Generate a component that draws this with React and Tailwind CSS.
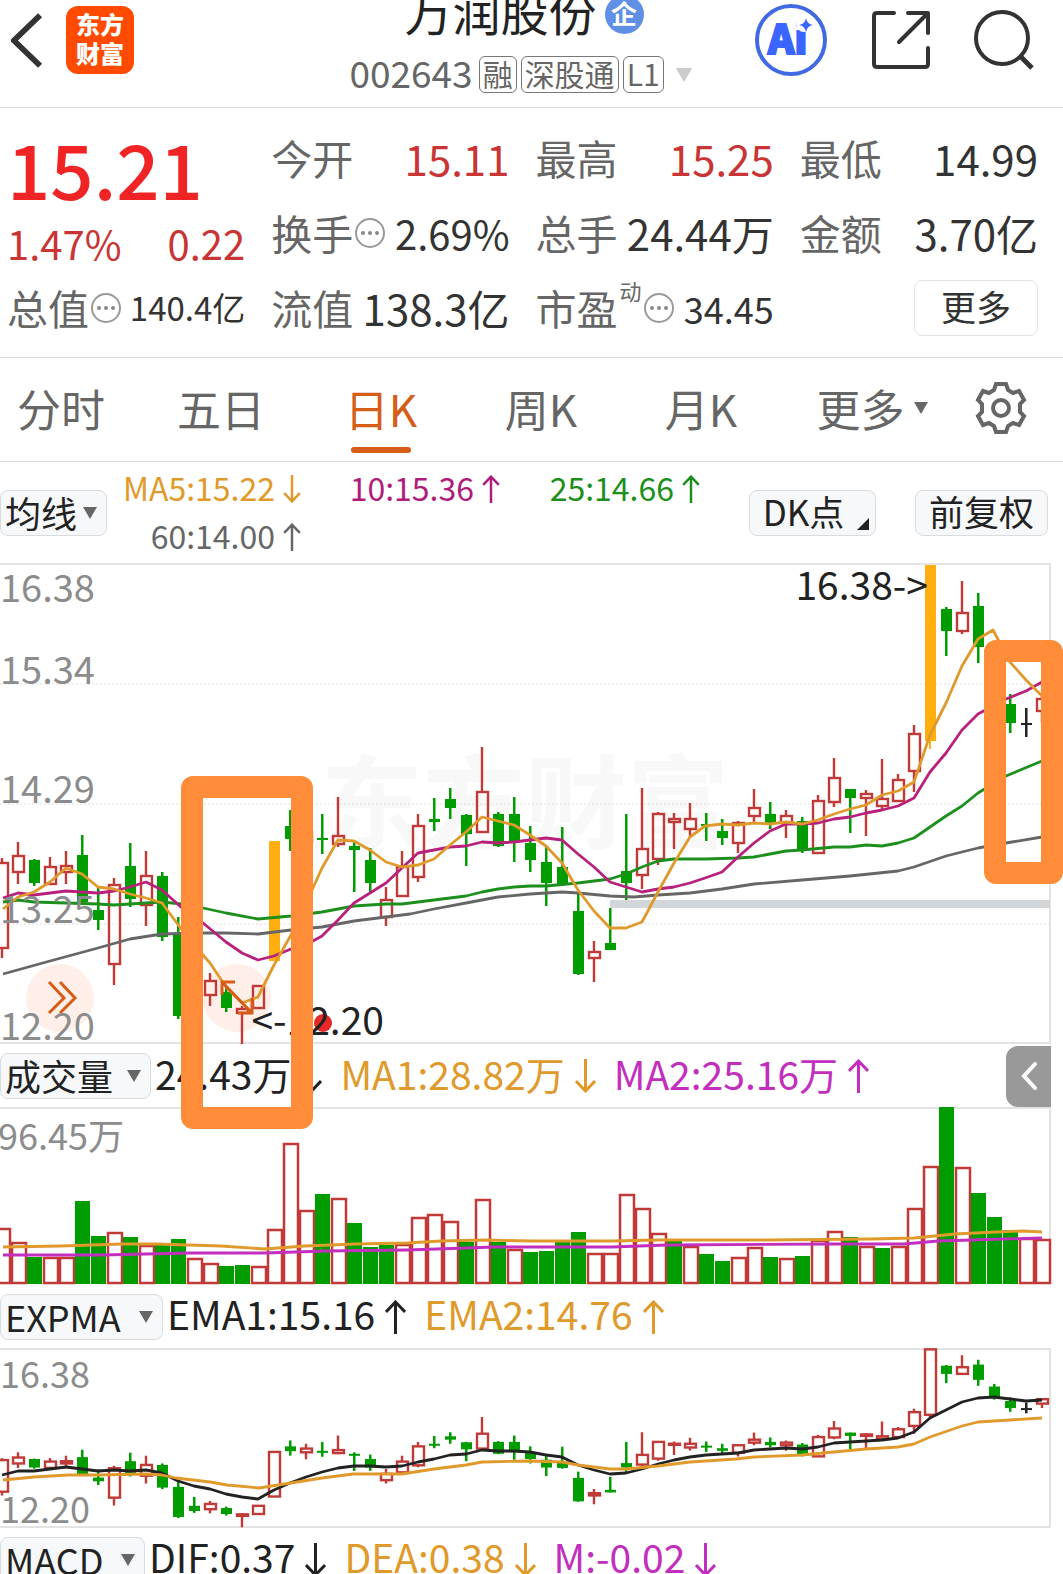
import { useState } from "react";

const RED = "#c03a38";
const GREEN = "#009c00";
const GOLD = "#e09a2b";

// [color, high, bodyTop, bodyBottom, low]
const candles = [
  ["r", 858, 863, 948, 958], ["r", 842, 856, 872, 884], ["g", 859, 860, 883, 886],
  ["r", 857, 867, 884, 885], ["r", 851, 866, 872, 884], ["g", 835, 855, 902, 903],
  ["g", 888, 910, 920, 930], ["r", 878, 885, 964, 985], ["g", 843, 866, 899, 907],
  ["r", 851, 876, 905, 926], ["g", 872, 876, 937, 941], ["g", 917, 935, 1016, 1019],
  ["g", 962, 986, 1000, 1005], ["r", 973, 981, 995, 1006], ["g", 988, 992, 1008, 1012],
  ["r", 1006, 1009, 1013, 1044], ["r", 985, 986, 1008, 1009], ["y", 841, 841, 961, 961],
  ["g", 810, 826, 839, 851], ["r", 819, 832, 842, 861], ["g", 814, 838, 840, 854],
  ["r", 797, 836, 844, 847], ["g", 842, 846, 850, 892], ["g", 848, 860, 883, 892],
  ["r", 887, 900, 917, 926], ["r", 851, 867, 896, 897], ["r", 814, 826, 877, 882],
  ["g", 798, 819, 822, 831], ["g", 788, 799, 808, 819], ["g", 814, 815, 834, 866],
  ["r", 747, 792, 832, 833], ["g", 812, 814, 846, 847], ["g", 797, 814, 842, 862],
  ["g", 826, 843, 860, 872], ["g", 846, 862, 883, 906], ["g", 827, 867, 884, 886],
  ["g", 894, 911, 974, 975], ["r", 941, 952, 958, 982], ["g", 908, 943, 950, 950],
  ["g", 814, 871, 883, 900], ["r", 788, 849, 875, 889], ["r", 812, 814, 859, 865],
  ["r", 813, 819, 822, 849], ["r", 803, 819, 829, 837], ["g", 813, 824, 826, 841],
  ["g", 819, 831, 838, 845], ["r", 821, 823, 843, 853], ["r", 789, 808, 816, 823],
  ["g", 802, 814, 823, 829], ["r", 810, 816, 823, 838], ["g", 817, 821, 851, 853],
  ["r", 795, 801, 853, 853], ["r", 758, 778, 802, 807], ["g", 789, 789, 798, 833],
  ["r", 790, 794, 798, 836], ["r", 759, 799, 806, 810], ["r", 774, 780, 801, 802],
  ["r", 725, 734, 771, 792], ["y", 565, 565, 741, 749], ["g", 607, 609, 631, 656],
  ["r", 581, 613, 631, 634], ["g", 593, 606, 647, 663], ["g", 658, 665, 695, 700],
  ["g", 694, 704, 723, 733], ["k", 708, 723, 724, 737], ["r", 696, 699, 711, 723],
];

const volumes = [
  ["r", 1229], ["r", 1243], ["g", 1257], ["r", 1258], ["r", 1258], ["g", 1201],
  ["g", 1236], ["r", 1233], ["g", 1237], ["r", 1246], ["g", 1245], ["g", 1239],
  ["r", 1259], ["r", 1264], ["g", 1266], ["g", 1265], ["r", 1267], ["r", 1230],
  ["r", 1144], ["r", 1211], ["g", 1194], ["r", 1199], ["g", 1223], ["g", 1247],
  ["g", 1245], ["r", 1245], ["r", 1218], ["r", 1215], ["r", 1222], ["g", 1242],
  ["r", 1200], ["g", 1242], ["r", 1250], ["g", 1252], ["g", 1251], ["g", 1241],
  ["g", 1232], ["r", 1254], ["r", 1254], ["r", 1195], ["r", 1209], ["r", 1234],
  ["g", 1239], ["r", 1247], ["g", 1254], ["g", 1261], ["r", 1258], ["r", 1248],
  ["g", 1257], ["r", 1259], ["g", 1256], ["r", 1241], ["r", 1232], ["g", 1237],
  ["r", 1247], ["g", 1248], ["r", 1247], ["r", 1209], ["r", 1167], ["g", 1107],
  ["r", 1168], ["g", 1193], ["g", 1217], ["g", 1230], ["r", 1239], ["r", 1240],
];

const ma5 =
  "3,909 18,897 34,892 50,882 66,868 82,874 98,887 114,889 130,894 146,898 162,903 182,930 203,955 210,963 226,987 242,1003 258,997 274,965 291,935 313,888 322,868 338,840 354,841 370,850 386,862 402,867 418,865 434,859 450,845 466,832 482,817 498,821 514,825 530,835 546,846 562,863 578,890 594,911 610,928 626,928 642,922 658,892 674,863 690,837 705,826 722,824 738,825 754,823 770,824 786,822 802,824 818,820 834,814 850,809 866,805 882,795 898,791 914,782 930,735 946,703 962,666 978,639 993,630 1010,662 1026,680 1042,696";
const ma10 =
  "3,898 18,893 34,895 66,891 98,893 114,891 130,887 146,882 162,890 182,908 203,923 226,942 242,953 258,960 274,956 291,949 313,941 322,936 338,920 354,903 370,893 386,883 402,868 418,853 434,850 450,847 466,846 482,842 498,843 514,842 530,840 546,838 562,840 578,854 594,867 610,882 626,887 642,892 658,889 674,887 690,883 705,878 722,872 738,857 754,843 770,831 786,824 802,824 818,823 834,819 850,817 866,813 882,810 898,806 914,798 930,772 946,753 962,730 978,714 1006,699 1026,691 1042,682";
const ma25 =
  "3,902 18,900 34,902 66,903 98,904 114,905 130,904 162,902 182,904 203,908 226,913 258,919 291,916 322,912 354,906 386,904 402,904 418,902 434,900 450,898 466,896 482,892 498,889 514,887 530,886 546,886 578,883 610,879 626,874 642,867 658,861 674,859 705,859 738,858 754,857 770,854 786,851 802,850 834,847 850,847 866,845 882,846 898,843 914,838 930,827 946,816 962,806 978,793 1006,776 1042,761";
const ma60 =
  "3,974 50,961 98,948 130,939 162,934 200,933 226,933 258,934 291,930 322,927 354,921 386,917 410,914 434,909 466,903 498,897 530,894 562,892 578,893 610,896 634,897 658,895 690,893 722,889 754,884 802,880 850,876 898,871 914,867 946,856 978,848 1006,843 1042,837";
const volMa1 =
  "3,1247 61,1246 122,1244 156,1244 221,1246 265,1249 305,1246 356,1244 407,1243 441,1241 485,1240 531,1241 612,1241 657,1240 769,1240 870,1239 914,1238 955,1234 996,1232 1023,1231 1042,1232";
const volMa2 =
  "3,1255 102,1255 190,1253 265,1253 326,1251 407,1250 495,1247 612,1247 667,1245 836,1244 904,1244 938,1241 972,1240 1042,1238";
const ema1 = [
  1475, 1471, 1471, 1469, 1467, 1469, 1471, 1470, 1471, 1470, 1473, 1481, 1486,
  1489, 1494, 1497, 1499, 1490, 1483, 1477, 1472, 1468, 1466, 1466, 1467, 1466,
  1462, 1459, 1455, 1454, 1450, 1451, 1451, 1452, 1455, 1457, 1465, 1470, 1474,
  1473, 1469, 1464, 1460, 1457, 1455, 1454, 1453, 1450, 1449, 1448, 1449, 1447,
  1443, 1442, 1441, 1440, 1438, 1432, 1418, 1410, 1402, 1398, 1397, 1399, 1401,
  1400,
];
const ema2 =
  "3,1480 34,1477 68,1475 98,1475 146,1474 162,1475 176,1478 210,1482 227,1485 259,1488 291,1483 322,1478 353,1474 402,1474 434,1469 466,1465 482,1462 530,1461 562,1462 578,1465 610,1469 626,1469 658,1466 690,1462 736,1459 754,1457 802,1455 834,1452 866,1449 898,1447 914,1444 930,1437 962,1426 978,1422 994,1421 1042,1418";

const xOf = (i) => 2 + i * 16;

const Candle = ({ x, data, y = (v) => v, hollow }) => {
  const [type, high, top, bottom, low] = data;
  const t = y(top);
  const h = Math.max(y(bottom) - t, 1);

  if (type === "y" && !hollow) {
    return (
      <g fill="#ffae0d">
        <rect x={x - 5} y={t} width="11" height={h} />
        <rect x={x - 1} y={t} width="2" height={low - t} />
      </g>
    );
  }
  if (type === "g" || type === "k") {
    const color = type === "g" ? GREEN : "#222";
    return (
      <g fill={color}>
        <rect x={x - 1} y={y(high)} width="2.5" height={y(low) - y(high)} />
        <rect x={x - 5} y={t} width="11" height={Math.max(h, 2)} />
      </g>
    );
  }
  return (
    <g stroke={RED} strokeWidth="2.4" fill="none">
      <path d={`M${x} ${y(high)}V${t}M${x} ${t + h}V${y(low)}`} />
      <rect x={x - 5} y={t} width="11" height={h} />
    </g>
  );
};

const Line = ({ points, color }) => (
  <polyline
    points={points}
    fill="none"
    stroke={color}
    strokeWidth="2.8"
    strokeLinejoin="round"
  />
);

const Arrow = ({ down, small }) => (
  <svg
    viewBox="0 0 21 34"
    className={`shrink-0 ${small ? "w-[18px] h-[28px]" : "w-[21px] h-[34px]"} ${down ? "rotate-180" : ""}`}
    fill="none"
    stroke="currentColor"
    strokeWidth="3"
  >
    <path d="M10.5 34V2M1 12L10.5 2L20 12" />
  </svg>
);

const Triangle = ({ className }) => (
  <svg viewBox="0 0 14 12" className={className} fill="currentColor">
    <path d="M0 0H14L7 12Z" />
  </svg>
);

const Dots = () => (
  <svg viewBox="0 0 30 30" className="w-[30px] h-[30px] shrink-0 ml-[2px]">
    <circle cx="15" cy="15" r="14" fill="none" stroke="#999" strokeWidth="2" />
    <circle cx="8" cy="15" r="2" fill="#888" />
    <circle cx="15" cy="15" r="2" fill="#888" />
    <circle cx="22" cy="15" r="2" fill="#888" />
  </svg>
);

const Picker = ({ label, options, className }) => (
  <label
    className={`relative flex items-center h-[46px] shrink-0 bg-[#f6f8fa] border border-[#d9dcdf] rounded-lg text-[#222] ${className}`}
  >
    <select
      aria-label={label}
      className="appearance-none w-full h-full pl-1 pb-1 bg-transparent text-[36px] leading-[42px] outline-none"
    >
      {options.map((o) => (
        <option key={o}>{o}</option>
      ))}
    </select>
    <Triangle className="absolute right-[9px] w-[14px] h-[12px] text-[#666] pointer-events-none" />
  </label>
);

const Reading = ({ text, down, small, className }) => (
  <span
    className={`flex items-center justify-end whitespace-nowrap ${small ? "gap-2 text-[32px]" : "gap-[10px] text-[39px]"} leading-none ${className}`}
  >
    <span className={small ? "-mt-1" : "-mt-[6px]"}>{text}</span>
    <Arrow down={down} small={small} />
  </span>
);

const Stat = ({ label, sup, dots, value, className = "text-[42px] text-[#333]" }) => (
  <div className="flex items-center justify-between whitespace-nowrap leading-none">
    <dt className="flex items-center text-[41px] text-[#666]">
      {label}
      {sup && <span className="text-[22px] self-start -mt-2 ml-[2px]">{sup}</span>}
      {dots && <Dots />}
    </dt>
    <dd className={className}>{value}</dd>
  </div>
);

const Header = () => (
  <header className="h-[108px] shrink-0 grid grid-cols-[1fr_auto_1fr] pl-[10px] pr-[29px] border-b border-[#d6d6d6]">
    <div className="flex items-start gap-[23px] pt-[6px]">
      <button aria-label="返回" className="mt-[7px]">
        <svg viewBox="0 0 34 56" className="w-[33px] h-[55px]" fill="none" stroke="#333" strokeWidth="6">
          <path d="M31 2L4 28L31 54" strokeLinejoin="round" />
        </svg>
      </button>
      <div className="w-[68px] h-[68px] pt-[3px] rounded-xl bg-[#ff4a00] text-white text-center font-black text-[24px] leading-[29px]">
        东方
        <br />
        财富
      </div>
    </div>
    <div className="flex flex-col items-center">
      <h1 className="flex items-center gap-2 -mt-[15px] pl-1 text-[48px] leading-[50px] text-[#222] whitespace-nowrap">
        万润股份
        <span className="flex items-center justify-center mt-[9px] w-[39px] h-[39px] rounded-full bg-[#6090e6] text-white text-[26px] font-bold leading-none pb-1">
          企
        </span>
      </h1>
      <div className="flex items-center gap-[4px] mt-[21px] text-[#666] leading-none whitespace-nowrap">
        <span className="text-[37px] -mt-1">002643</span>
        <span className="h-[37px] px-[3px] ml-[2px] border border-[#777] rounded-md text-[30px] leading-[32px]">融</span>
        <span className="h-[37px] px-[3px] border border-[#777] rounded-md text-[30px] leading-[32px]">深股通</span>
        <span className="h-[37px] px-[3px] border border-[#777] rounded-md text-[30px] leading-[32px]">L1</span>
        <Triangle className="w-[22px] h-[14px] ml-[5px] text-[#ccc]" />
      </div>
    </div>
    <div className="flex items-start justify-end gap-[44px] pt-[3px]">
      <button aria-label="Ai">
        <svg viewBox="0 0 74 74" className="w-[74px] h-[74px]">
          <circle cx="37" cy="37" r="34" fill="none" stroke="#4169e1" strokeWidth="4" />
          <text x="14" y="51" fontSize="40" fontWeight="900" fill="#3a66ff" stroke="#3a66ff" strokeWidth="2">
            Ai
          </text>
          <circle cx="50" cy="21" r="8" fill="#fff" />
          <path d="M52 15Q53 21 59 22Q53 23 52 29Q51 23 45 22Q51 21 52 15Z" fill="#3a66ff" />
        </svg>
      </button>
      <button aria-label="分享" className="mt-2">
        <svg
          viewBox="0 0 58 58"
          className="w-[58px] h-[58px]"
          fill="none"
          stroke="#333"
          strokeWidth="4"
          strokeLinecap="round"
          strokeLinejoin="round"
        >
          <path d="M22 2H5Q2 2 2 5V53Q2 56 5 56H53Q56 56 56 53V37M36 2H56V22M55 3L27 31" />
        </svg>
      </button>
      <button aria-label="搜索" className="mt-[7px]">
        <svg viewBox="0 0 60 60" className="w-[60px] h-[60px]" fill="none" stroke="#333" strokeWidth="4">
          <circle cx="28" cy="28" r="26" />
          <path d="M46 46L58 58" strokeWidth="5" />
        </svg>
      </button>
    </div>
  </header>
);

const Quote = () => (
  <dl className="h-[250px] shrink-0 grid grid-cols-4 grid-rows-[75px_75px_75px] gap-x-[26px] pt-[12px] pl-[7px] pr-[25px] border-b border-[#d6d6d6]">
    <div className="row-span-2 leading-none">
      <div className="text-[76px] font-medium text-[#f02424] mt-[9px]">15.21</div>
      <div className="flex justify-between mt-[18px] text-[40px] text-[#c93434]">
        <span>1.47%</span>
        <span>0.22</span>
      </div>
    </div>
    <Stat label="今开" value="15.11" className="text-[42px] text-[#c93434]" />
    <Stat label="最高" value="15.25" className="text-[42px] text-[#c93434]" />
    <Stat label="最低" value="14.99" />
    <Stat label="换手" dots value="2.69%" className="text-[40px] text-[#333]" />
    <Stat label="总手" value="24.44万" />
    <Stat label="金额" value="3.70亿" />
    <Stat label="总值" dots value="140.4亿" className="text-[33px] text-[#333]" />
    <Stat label="流值" value="138.3亿" />
    <Stat label="市盈" sup="动" dots value="34.45" className="text-[36px] text-[#333]" />
    <div className="flex items-center justify-end">
      <button className="w-[124px] h-[56px] pb-1 border border-[#e3e3e3] rounded-lg text-[35px] leading-none text-[#333]">
        更多
      </button>
    </div>
  </dl>
);

const tabs = ["分时", "五日", "日K", "周K", "月K", "更多"];

const Tabs = () => {
  const [active, setActive] = useState("日K");

  return (
    <nav className="h-[104px] shrink-0 grid grid-cols-[141fr_160fr_160fr_160fr_160fr_182fr_75fr] pr-[25px] border-b border-[#d6d6d6] text-[44px] leading-none text-[#666]">
      {tabs.map((tab, i) => (
        <button
          key={tab}
          onClick={() => setActive(tab)}
          className={`relative flex items-center pb-1 whitespace-nowrap ${i === 0 ? "pl-[17px]" : "justify-center"} ${active === tab ? "text-[#d65d18]" : ""}`}
        >
          {tab}
          {tab === "更多" && <Triangle className="w-[14px] h-[12px] ml-[9px]" />}
          {active === tab && (
            <span className="absolute bottom-2 left-1/2 -translate-x-1/2 w-[60px] h-[6px] rounded-full bg-[#d65d18]" />
          )}
        </button>
      ))}
      <button aria-label="设置" className="flex items-center justify-center pb-1">
        <svg viewBox="0 0 52 52" className="w-[52px] h-[52px]" fill="none" stroke="currentColor" strokeWidth="4">
          <path d="M21 2H31L33 8L38 11L44 9L49 18L45 22V30L49 34L44 43L38 41L33 44L31 50H21L19 44L14 41L8 43L3 34L7 30V22L3 18L8 9L14 11L19 8Z" />
          <circle cx="26" cy="26" r="8" />
        </svg>
      </button>
    </nav>
  );
};

const toolButton =
  "relative h-[46px] pb-1 bg-[#f6f8fa] border border-[#d9dcdf] rounded-lg text-[35px] leading-none text-[#222]";

const Averages = () => (
  <div className="h-[101px] shrink-0 flex items-center pr-[15px]">
    <Picker label="指标" options={["均线", "BOLL"]} className="w-[107px]" />
    <div className="grid grid-cols-[194px_199px_200px] grid-rows-[48px_48px]">
      <Reading small down text="MA5:15.22" className="text-[#e09a2b]" />
      <Reading small text="10:15.36" className="text-[#b01c7c]" />
      <Reading small text="25:14.66" className="text-[#1c8f1c]" />
      <Reading small text="60:14.00" className="text-[#666]" />
    </div>
    <div className="flex gap-[39px] ml-auto">
      <button className={`${toolButton} w-[127px] pr-[18px]`}>
        DK点
        <svg viewBox="0 0 12 12" className="absolute right-[6px] bottom-[5px] w-3 h-3" fill="#222">
          <path d="M12 0V12H0Z" />
        </svg>
      </button>
      <button className={`${toolButton} w-[133px]`}>前复权</button>
    </div>
  </div>
);

const PriceChart = () => (
  <svg viewBox="0 563 1063 482" className="block w-full h-auto">
    <text x="321" y="841" fontSize="102" fontWeight="700" fill="#f8f8f8">
      东方财富
    </text>
    <circle cx="60" cy="998" r="34" fill="#ffefe8" />
    <circle cx="237" cy="998" r="34" fill="#ffefe8" />
    <path d="M0 564H1050V1043H0" fill="none" stroke="#e3e3e3" strokeWidth="2" />
    <path d="M0 684H1050M0 804H1050M0 924H1050" stroke="#dedede" strokeDasharray="2 2" />
    <rect x="610" y="900" width="440" height="8" fill="#d3d7da" />
    {candles.map((c, i) => (
      <Candle key={i} x={xOf(i)} data={c} />
    ))}
    <Line points={ma60} color="#666" />
    <Line points={ma25} color="#1c8f1c" />
    <Line points={ma10} color="#b8207c" />
    <Line points={ma5} color={GOLD} />
    <path
      d="M49 982L64 998L49 1013M60 982L75 998L60 1013M222 995V982H235M223 983L251 1012M252 998V1013H238"
      fill="none"
      stroke="#d65d18"
      strokeWidth="3"
    />
    <g fontSize="38" fill="#8c8c8c">
      <text x="0" y="602">16.38</text>
      <text x="0" y="684">15.34</text>
      <text x="0" y="803">14.29</text>
      <text x="0" y="923">13.25</text>
      <text x="0" y="1040">12.20</text>
    </g>
    <circle cx="323" cy="1023" r="9" fill="#e62828" />
    <g fontSize="39" fill="#222">
      <text x="928" y="600" textAnchor="end">16.38-&gt;</text>
      <text x="384" y="1035" textAnchor="end">&lt;-12.20</text>
    </g>
  </svg>
);

const VolumeChart = () => (
  <svg viewBox="0 1107 1063 178" className="block w-full h-auto">
    <path d="M0 1108H1050V1284" fill="none" stroke="#e3e3e3" strokeWidth="2" />
    {volumes.map(([type, top], i) =>
      type === "g" ? (
        <rect key={i} x={xOf(i) - 7} y={top} width="15" height={1284 - top} fill={GREEN} />
      ) : (
        <rect
          key={i}
          x={xOf(i) - 6}
          y={top}
          width="14"
          height={1283 - top}
          fill="#fff"
          stroke={RED}
          strokeWidth="2.5"
        />
      ),
    )}
    <Line points={volMa1} color={GOLD} />
    <Line points={volMa2} color="#c22fbe" />
    <text x="-2" y="1150" fontSize="36" fill="#8c8c8c">
      96.45万
    </text>
  </svg>
);

const ExpmaChart = () => {
  // same candles, squeezed into the lower panel
  const y = (v) => 1349 + (v - 564) * 0.3716;

  return (
    <svg viewBox="0 1348 1063 180" className="block w-full h-auto shrink-0">
      <path d="M0 1349H1050V1527H0" fill="none" stroke="#e3e3e3" strokeWidth="2" />
      <g fontSize="36" fill="#8c8c8c">
        <text x="0" y="1388">16.38</text>
        <text x="0" y="1523">12.20</text>
      </g>
      {candles.map((c, i) => (
        <Candle key={i} x={xOf(i)} data={c} y={y} hollow />
      ))}
      <Line points={ema1.map((v, i) => `${xOf(i)},${v}`).join(" ")} color="#222" />
      <Line points={ema2} color={GOLD} />
    </svg>
  );
};

const App = () => {
  return (
    <main className="relative flex flex-col h-screen overflow-hidden bg-white font-['Noto_Sans_CJK_SC',sans-serif]">
      <Header />
      <Quote />
      <Tabs />
      <Averages />
      <section className="relative shrink-0">
        <PriceChart />
        <div className="h-[62px] flex items-center">
          <Picker label="副图一" options={["成交量", "成交额"]} className="w-[151px]" />
          <Reading down text="24.43万" className="ml-[4px] text-[#222]" />
          <Reading down text="MA1:28.82万" className="ml-[18px] text-[#e09a2b]" />
          <Reading text="MA2:25.16万" className="ml-[18px] text-[#c22fbe]" />
          <button
            aria-label="展开"
            className="flex items-center justify-center w-[45px] h-[61px] ml-auto mr-3 rounded-l-xl bg-[#999]"
          >
            <svg
              viewBox="0 0 16 28"
              className="w-[16px] h-[28px]"
              fill="none"
              stroke="#fff"
              strokeWidth="4"
              strokeLinecap="round"
            >
              <path d="M14 2L3 14L14 26" />
            </svg>
          </button>
        </div>
        <VolumeChart />
        {/* highlighted ranges */}
        <div className="absolute left-[181px] top-[213px] w-[132px] h-[353px] border-[22px] border-[#ff8c38] rounded-xl" />
        <div className="absolute right-0 top-[77px] w-[79px] h-[244px] border-[22px] border-[#ff8c38] rounded-xl" />
      </section>
      <div className="h-[63px] shrink-0 flex items-center">
        <Picker label="副图二" options={["EXPMA", "KDJ"]} className="w-[163px]" />
        <Reading text="EMA1:15.16" className="ml-[4px] text-[#222]" />
        <Reading text="EMA2:14.76" className="ml-[18px] text-[#e09a2b]" />
      </div>
      <ExpmaChart />
      <div className="h-[63px] shrink-0 flex items-center">
        <Picker label="副图三" options={["MACD", "RSI"]} className="w-[145px]" />
        <Reading down text="DIF:0.37" className="ml-[4px] text-[#222]" />
        <Reading down text="DEA:0.38" className="ml-[18px] text-[#e09a2b]" />
        <Reading down text="M:-0.02" className="ml-[18px] text-[#c22fbe]" />
      </div>
    </main>
  );
};

export default App;
